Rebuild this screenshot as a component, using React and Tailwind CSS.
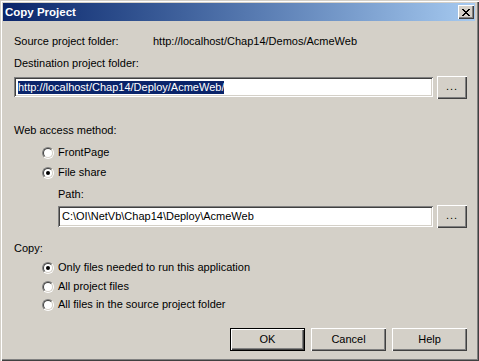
import React from "react";

const raised =
  "bg-[#d4d0c8] shadow-[inset_1px_1px_#ffffff,inset_-1px_-1px_#404040,inset_-2px_-2px_#808080]";
const sunken =
  "bg-white shadow-[inset_1px_1px_#808080,inset_-1px_-1px_#ffffff,inset_2px_2px_#404040,inset_-2px_-2px_#d4d0c8]";

function Radio({ checked, label, className = "" }) {
  return (
    <div className={`flex items-center h-[13px] ${className}`}>
      <div className="w-[12px] h-[12px] rounded-full border border-t-[#808080] border-l-[#808080] border-r-white border-b-white">
        <div className="w-full h-full rounded-full border border-t-[#404040] border-l-[#404040] border-r-[#d4d0c8] border-b-[#d4d0c8] bg-white flex items-center justify-center">
          {checked && <div className="w-[4px] h-[4px] rounded-full bg-black" />}
        </div>
      </div>
      <span className="ml-[4px]">{label}</span>
    </div>
  );
}

function Browse() {
  return (
    <div className={`w-[30px] h-[23px] ${raised} flex items-center justify-center ml-[4px]`}>
      <span className="text-[11px] leading-[13px] tracking-[1px] -mt-[2px]">...</span>
    </div>
  );
}

function Btn({ children, primary }) {
  if (primary) {
    return (
      <div className="w-[75px] h-[23px] border border-black">
        <div className={`w-full h-full ${raised} flex items-center justify-center`}>{children}</div>
      </div>
    );
  }
  return <div className={`w-[75px] h-[23px] ${raised} flex items-center justify-center`}>{children}</div>;
}

export default function App() {
  return (
    <div className="w-[479px] h-[361px] bg-[#d4d0c8] pl-[3px] pt-[3px] pr-[4px] pb-[4px] shadow-[inset_1px_1px_#d4d0c8,inset_2px_2px_#ffffff,inset_-1px_-1px_#404040,inset_-2px_-2px_#808080] font-['Liberation_Sans',Arial,sans-serif] text-[11px] leading-[13px] text-black flex flex-col">
      <div className="h-[18px] bg-linear-to-r from-[#0a246a] to-[#a6caf0] flex items-center justify-between pl-[2px] pr-[1px]">
        <span className="text-white font-bold text-[11.5px]">Copy Project</span>
        <div className={`w-[16px] h-[14px] ${raised} flex items-center justify-center`}>
          <svg width="8" height="7" viewBox="0 0 8 7" shapeRendering="crispEdges">
            <path d="M0 0h2v1H0zM6 0h2v1H6zM1 1h2v1H1zM5 1h2v1H5zM2 2h4v1H2zM3 3h2v1H3zM2 4h4v1H2zM1 5h2v1H1zM5 5h2v1H5zM0 6h2v1H0zM6 6h2v1H6z" fill="#000" />
          </svg>
        </div>
      </div>

      <div className="flex flex-col pl-[11px] pr-[8px]">
        <div className="flex mt-[14px] h-[13px]">
          <span className="w-[139px]">Source project folder:</span>
          <span>http://localhost/Chap14/Demos/AcmeWeb</span>
        </div>

        <div className="mt-[9px] h-[13px]">Destination project folder:</div>

        <div className="flex items-center mt-[5px] h-[24px]">
          <div className={`flex-1 h-[20px] ${sunken} flex items-center pl-[4px]`}>
            <span className="bg-[#0a246a] text-white">http://localhost/Chap14/Deploy/AcmeWeb/</span>
          </div>
          <Browse />
        </div>

        <div className="mt-[25px] h-[13px]">Web access method:</div>
        <Radio className="mt-[9px] ml-[28px]" label="FrontPage" />
        <Radio className="mt-[7px] ml-[28px]" label="File share" checked />

        <div className="mt-[9px] h-[13px] ml-[44px]">Path:</div>
        <div className="flex items-center mt-[4px] h-[23px] ml-[44px]">
          <div className={`flex-1 h-[21px] ${sunken} flex items-center pl-[4px]`}>
            <span>C:\OI\NetVb\Chap14\Deploy\AcmeWeb</span>
          </div>
          <Browse />
        </div>

        <div className="mt-[14px] h-[13px]">Copy:</div>
        <Radio className="mt-[6px] ml-[28px]" label="Only files needed to run this application" checked />
        <Radio className="mt-[6px] ml-[28px]" label="All project files" />
        <Radio className="mt-[5px] ml-[28px]" label="All files in the source project folder" />

        <div className="flex justify-end gap-[6px] mt-[17px]">
          <Btn primary>OK</Btn>
          <Btn>Cancel</Btn>
          <Btn>Help</Btn>
        </div>
      </div>
    </div>
  );
}
